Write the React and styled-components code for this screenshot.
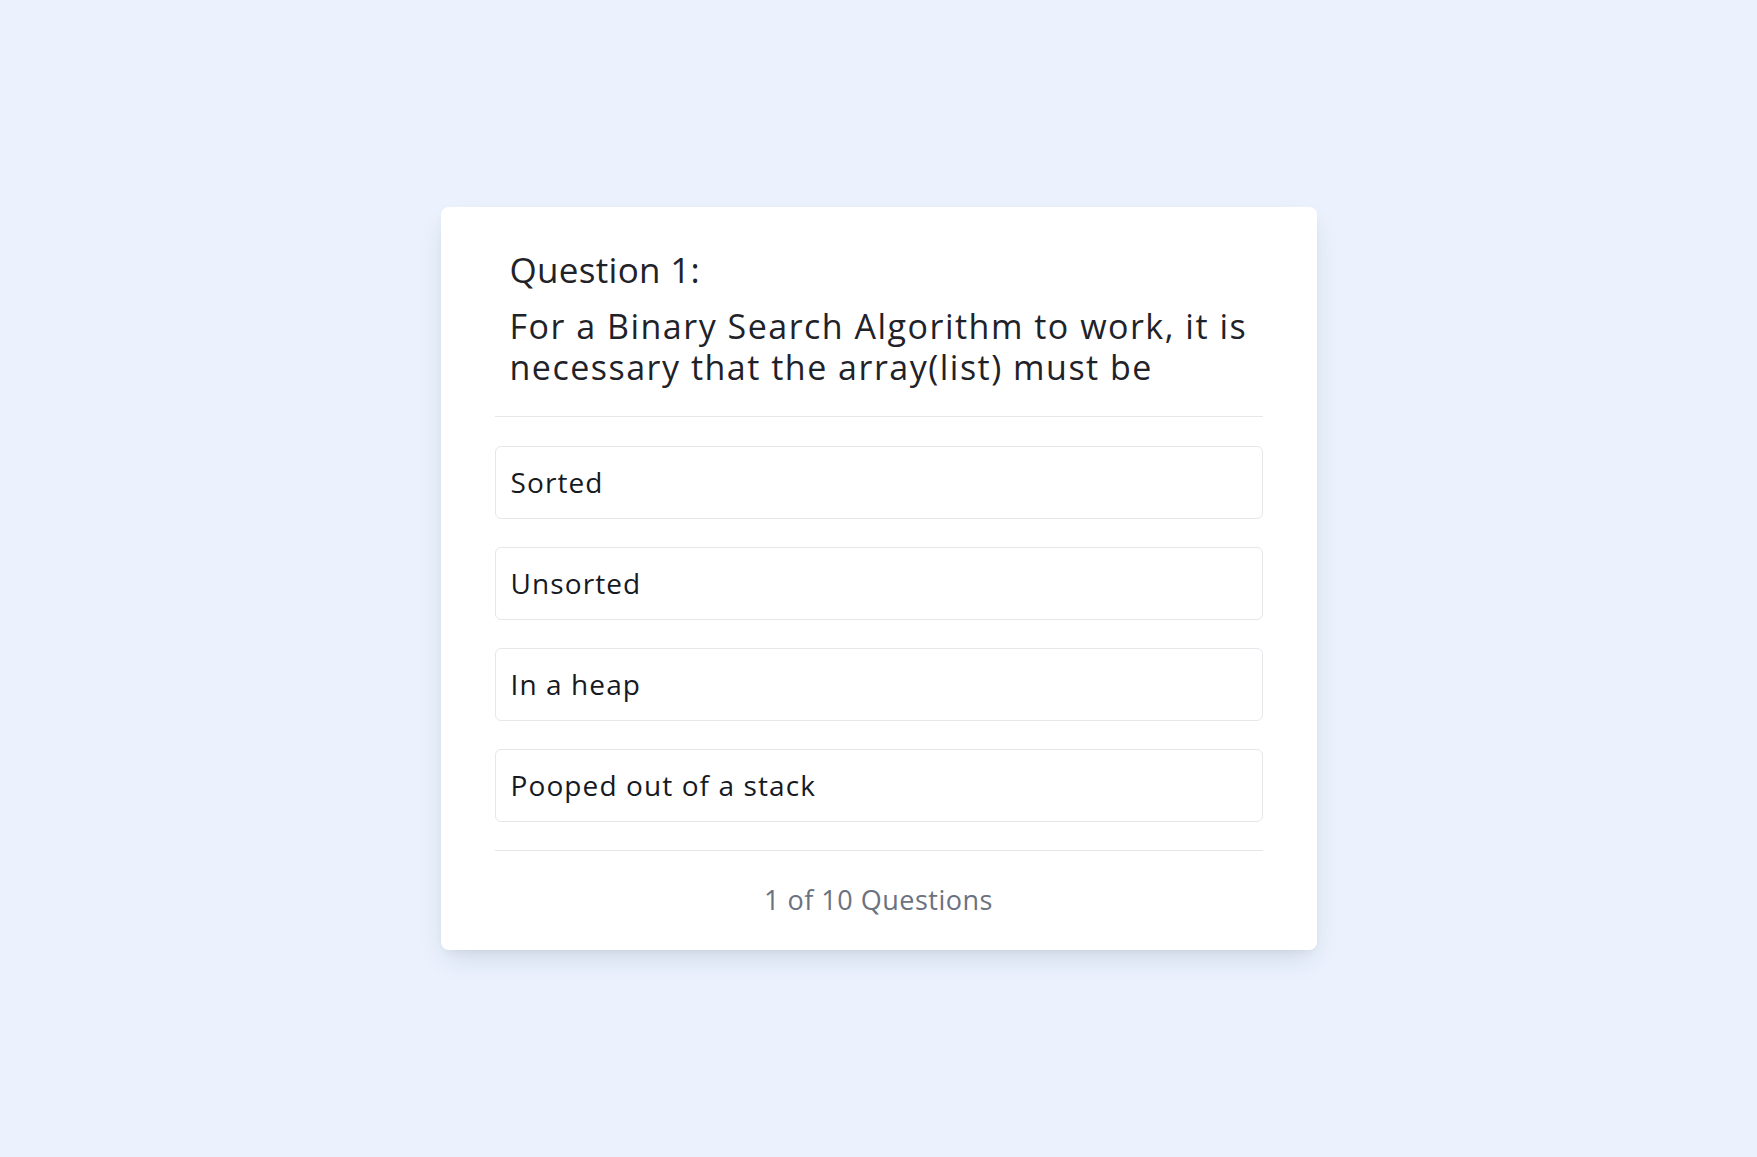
import styled, { createGlobalStyle } from "styled-components";

const GlobalStyle = createGlobalStyle`
  * {
    box-sizing: border-box;
  }

  body {
    margin: 0;
    background-color: #ebf2fe;
    font-family: "Open Sans", "Noto Sans", sans-serif;
    color: #1f2329;
  }
`;

const question = {
  number: 1,
  text: "For a Binary Search Algorithm to work, it is necessary that the array(list) must be",
  options: ["Sorted", "Unsorted", "In a heap", "Pooped out of a stack"],
};

const total = 10;

function App() {
  return (
    <>
      <GlobalStyle />
      <Page>
        <Card>
          <Header>
            <Label>Question {question.number}:</Label>
            <QuestionText>{question.text}</QuestionText>
          </Header>

          <Options>
            {question.options.map((option) => (
              <Option key={option}>{option}</Option>
            ))}
          </Options>

          <Footer>
            {question.number} of {total} Questions
          </Footer>
        </Card>
      </Page>
    </>
  );
}

export default App;

const Page = styled.div`
  min-height: 100vh;
  display: flex;
  align-items: center;
  justify-content: center;
`;

const Card = styled.div`
  width: 876px;
  padding: 41px 54px 32px;
  background-color: #fff;
  border-radius: 8px;
  box-shadow: 0 12px 28px -6px rgba(30, 41, 59, 0.14),
    0 4px 10px -4px rgba(30, 41, 59, 0.08);
`;

const Header = styled.div`
  padding: 0 15px 28px;
  border-bottom: 1px solid #e5e7eb;
`;

const Label = styled.h2`
  margin: 0 0 14px;
  font-size: 35px;
  font-weight: 500;
  line-height: 1.25;
  letter-spacing: 0.3px;
`;

const QuestionText = styled.h1`
  margin: 0;
  font-size: 34px;
  font-weight: 500;
  line-height: 41px;
  letter-spacing: 1.5px;
`;

const Options = styled.ul`
  list-style: none;
  margin: 0;
  padding: 29px 0 28px;
  display: flex;
  flex-direction: column;
  gap: 28px;
  border-bottom: 1px solid #e5e7eb;
`;

const Option = styled.li`
  height: 73px;
  display: flex;
  align-items: center;
  padding: 0 15px;
  border: 1px solid #e5e7eb;
  border-radius: 6px;
  font-size: 28px;
  letter-spacing: 1.1px;
  color: #16191f;
  cursor: pointer;
`;

const Footer = styled.div`
  padding-top: 30px;
  text-align: center;
  font-size: 27px;
  letter-spacing: 0.5px;
  color: #6b7280;
`;
